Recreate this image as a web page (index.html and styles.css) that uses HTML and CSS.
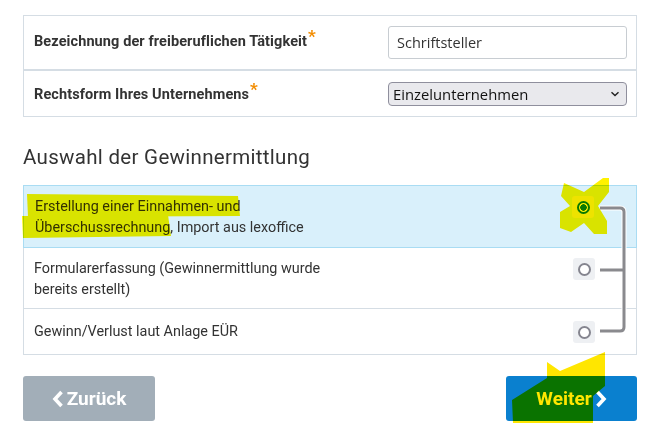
FILE: index.html
```html
<!DOCTYPE html>
<html lang="de">
<head>
  <meta charset="UTF-8">
  <meta name="viewport" content="width=device-width, initial-scale=1">
  <title>Gewinnermittlung</title>
  <link rel="stylesheet" href="styles.css">
</head>
<body>

  <div class="page">

    <div class="card">
      <div class="form-row row-first">
        <label class="form-label">Bezeichnung der freiberuflichen Tätigkeit<span class="req">*</span></label>
        <input class="form-input" type="text" value="Schriftsteller">
      </div>
      <div class="form-row row-second">
        <label class="form-label">Rechtsform Ihres Unternehmens<span class="req">*</span></label>
        <div class="select-wrap">
          <select class="form-select">
            <option>Einzelunternehmen</option>
          </select>
          <svg class="select-arrow" width="10" height="6" viewBox="0 0 10 6">
            <path d="M1.5 1.2 L5 4.6 L8.5 1.2" fill="none" stroke="#222" stroke-width="1.4"/>
          </svg>
        </div>
      </div>
    </div>

    <h2 class="section-title">Auswahl der Gewinnermittlung</h2>

    <div class="options">
      <div class="option selected">
        <div class="option-text">Erstellung einer Einnahmen- und<br>Überschussrechnung, Import aus lexoffice</div>
        <span class="radio-box"><span class="radio checked"></span></span>
      </div>
      <div class="option">
        <div class="option-text">Formularerfassung (Gewinnermittlung wurde<br>bereits erstellt)</div>
        <span class="radio-box"><span class="radio"></span></span>
      </div>
      <div class="option last">
        <div class="option-text">Gewinn/Verlust laut Anlage EÜR</div>
        <span class="radio-box"><span class="radio"></span></span>
      </div>

      <!-- connector between the three radios -->
      <svg class="bracket" width="40" height="130" viewBox="0 0 40 130">
        <path d="M4 4 H24 Q28 4 28 8 V123 Q28 127 24 127 H4 M4 66 H28" fill="none" stroke="#fff" stroke-width="5"/>
        <path d="M4 4 H24 Q28 4 28 8 V123 Q28 127 24 127 H4 M4 66 H28" fill="none" stroke="#8a8a8e" stroke-width="3"/>
      </svg>
    </div>

    <div class="actions">
      <button class="btn btn-back">
        <svg width="12" height="18" viewBox="0 0 12 18"><path d="M9.5 2 L3 9 L9.5 16" fill="none" stroke="#fff" stroke-width="3.6"/></svg>
        Zurück
      </button>
      <button class="btn btn-next">
        Weiter
        <svg width="12" height="18" viewBox="0 0 12 18"><path d="M2.5 2 L9 9 L2.5 16" fill="none" stroke="#fff" stroke-width="3.6"/></svg>
      </button>
    </div>

    <!-- highlighter marks drawn over the screenshot -->
    <svg class="marks" width="656" height="429" viewBox="0 0 656 429">
      <polygon points="27,194 238,196 240,216 28,217" fill="#fff200"/>
      <polygon points="22,216 168,215 171,236 23,238" fill="#fff200"/>
      <polygon points="564,183 584,192 603,178 609,178 609,192 598,206 607,221 607,234 594,234 584,223 571,232 560,228 560,212 570,206 561,196" fill="#fff200"/>
      <polygon points="547,362 560,371 605,352 605,386 593,396 593,423 513,423 512,400 547,378" fill="#ffe600"/>
    </svg>

  </div>

</body>
</html>
```

FILE: styles.css
```css
* {
  box-sizing: border-box;
  margin: 0;
  padding: 0;
}

body {
  font-family: Roboto, "Liberation Sans", sans-serif;
  background-color: #fff;
  color: #333;
}

.page {
  position: relative;
  width: 656px;
  height: 429px;
  padding: 15px 19px 0 23px;
}

.card {
  border: 1px solid #d5dde4;
}

.form-row {
  display: flex;
  align-items: center;
  justify-content: space-between;
  padding: 0 9px 0 10px;
}

.row-first {
  height: 55px;
  border-bottom: 2px solid #d5dde4;
}

.row-second {
  height: 45px;
}

.form-label {
  font-size: 14.5px;
  font-weight: bold;
  color: #333;
  letter-spacing: 0.1px;
  margin-top: -6px;
}

.row-first .form-label {
  margin-top: -10px;
}

.req {
  color: #f28c00;
  font-size: 17px;
  vertical-align: 4px;
  margin-left: 1px;
}

.form-input {
  width: 239px;
  height: 33px;
  border: 1px solid #c8cdd2;
  border-radius: 3px;
  padding: 0 8px;
  font-family: "Open Sans", sans-serif;
  font-size: 14.5px;
  color: #333;
}

.select-wrap {
  position: relative;
  width: 239px;
}

.form-select {
  appearance: none;
  width: 100%;
  height: 24px;
  border: 1px solid #8f8f9d;
  border-radius: 4px;
  background-color: #e9e9ed;
  padding: 0 4px;
  font-family: "Open Sans", sans-serif;
  font-size: 14.8px;
  color: #111;
}

.select-arrow {
  position: absolute;
  right: 7px;
  top: 9px;
}

.section-title {
  font-size: 20.5px;
  font-weight: normal;
  letter-spacing: 0.3px;
  color: #333;
  margin: 27px 0 15px;
  line-height: 26px;
}

.options {
  position: relative;
  border: 1px solid #d5dde4;
}

.option {
  display: flex;
  justify-content: space-between;
  align-items: flex-start;
  padding: 10px 41px 0 10px;
  height: 61px;
  border-bottom: 1px solid #d5dde4;
  font-size: 14.4px;
  line-height: 21px;
  color: #333;
}

.option.selected {
  background-color: #d9f0fb;
  border: 1px solid #a9dcf3;
  margin: -1px -1px 0;
  padding-left: 11px;
  padding-right: 42px;
  height: 63px;
}

.option.last {
  border-bottom: none;
  height: 45px;
  padding-top: 12px;
}

.radio-box {
  display: flex;
  align-items: center;
  justify-content: center;
  width: 22px;
  height: 22px;
  border-radius: 3px;
  background-color: #eef0f3;
}

.radio {
  width: 13px;
  height: 13px;
  border-radius: 50%;
  border: 2px solid #85858f;
  background: #fff;
}

.radio.checked {
  border-color: #0a7fcf;
  background: radial-gradient(circle, #0a7fcf 0 3px, #fff 3.5px);
}

.bracket {
  position: absolute;
  left: 572px;
  top: 18px;
}

.actions {
  display: flex;
  justify-content: space-between;
  margin-top: 21px;
}

.btn {
  display: flex;
  align-items: center;
  justify-content: center;
  gap: 3px;
  height: 45px;
  border: none;
  border-radius: 3px;
  color: #fff;
  font-family: Roboto, sans-serif;
  font-size: 19px;
  font-weight: bold;
  cursor: pointer;
}

.btn-back {
  width: 132px;
  background-color: #a2aeb8;
}

.btn-next {
  width: 131px;
  background-color: #0a80cf;
}

.marks {
  position: absolute;
  top: 0;
  left: 0;
  pointer-events: none;
  mix-blend-mode: multiply;
}
```
